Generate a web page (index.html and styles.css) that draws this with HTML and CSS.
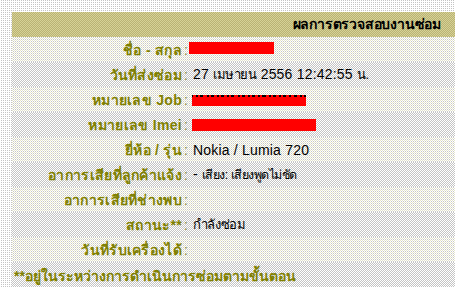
FILE: index.html
```html
<!DOCTYPE html>
<html lang="th">
<head>
<meta charset="utf-8">
<link rel="stylesheet" href="styles.css">
</head>
<body>
<div class="panel">
  <div class="head">ผลการตรวจสอบงานซ่อม</div>
  <div class="row light">
    <div class="lbl">ชื่อ - สกุล</div>
    <div class="val"><span class="colon">:</span><span class="redact r1"></span></div>
  </div>
  <div class="row dark">
    <div class="lbl">วันที่ส่งซ่อม</div>
    <div class="val"><span class="colon">:</span><span class="txt">27 <span class="th">เมษายน</span> 2556 12:42:55 <span class="th">น.</span></span></div>
  </div>
  <div class="row light">
    <div class="lbl">หมายเลข Job</div>
    <div class="val"><span class="colon">:</span><span class="redact r3"></span></div>
  </div>
  <div class="row dark">
    <div class="lbl">หมายเลข Imei</div>
    <div class="val"><span class="colon">:</span><span class="redact r4"></span></div>
  </div>
  <div class="row light">
    <div class="lbl">ยี่ห้อ / รุ่น</div>
    <div class="val"><span class="colon">:</span><span class="txt">Nokia / Lumia 720</span></div>
  </div>
  <div class="row dark">
    <div class="lbl">อาการเสียที่ลูกค้าแจ้ง</div>
    <div class="val"><span class="colon">:</span><span class="txt">- <span class="th narrow">เสียง: เสียงพูดไม่ชัด</span></span></div>
  </div>
  <div class="row light">
    <div class="lbl">อาการเสียที่ช่างพบ</div>
    <div class="val"><span class="colon">:</span></div>
  </div>
  <div class="row dark">
    <div class="lbl">สถานะ**</div>
    <div class="val"><span class="colon">:</span><span class="txt th">กำลังซ่อม</span></div>
  </div>
  <div class="row light">
    <div class="lbl">วันที่รับเครื่องได้</div>
    <div class="val"><span class="colon">:</span></div>
  </div>
  <div class="row dark foot">
    <div class="note">**อยู่ในระหว่างการดำเนินการซ่อมตามขั้นตอน</div>
  </div>
</div>
</body>
</html>
```
FILE: styles.css
```css
html, body {
  margin: 0;
  padding: 0;
}
body {
  width: 455px;
  height: 287px;
  overflow: hidden;
  background: conic-gradient(#c4c4c4 0 25%, #ffffff 0) 0 0 / 2px 2px;
  font-family: "Liberation Sans", "DejaVu Sans", sans-serif;
  font-size: 14px;
  color: #000;
}
.panel {
  margin: 12px 0 0 12px;
  display: flex;
  flex-direction: column;
}
.head {
  height: 25px;
  line-height: 25px;
  text-align: right;
  padding-right: 14px;
  font-weight: bold;
  font-size: 14px;
  letter-spacing: -0.2px;
  background: repeating-conic-gradient(#bab274 0 25%, #d6d296 0 50%) 0 0 / 2px 2px;
}
.row {
  height: 25px;
  display: grid;
  grid-template-columns: 170px 1fr;
  align-items: center;
}
.light {
  background:
    conic-gradient(#c8c8c8 0 25%, transparent 0) 0 0 / 2px 2px,
    conic-gradient(from 180deg, #e6e6cc 0 25%, #ffffff 0) 0 0 / 2px 2px;
}
.dark {
  background: repeating-conic-gradient(#c4c4c4 0 25%, #ffffff 0 50%) 0 0 / 2px 2px;
}
.lbl {
  text-align: right;
  color: #808000;
  font-weight: bold;
  font-size: 14px;
  letter-spacing: 0.3px;
}
.val {
  display: flex;
  align-items: center;
  white-space: nowrap;
}
.colon {
  color: #8c8c40;
  padding: 0 5px 0 2px;
}
.txt {
  letter-spacing: 0.2px;
}
.th {
  font-size: 13px;
  letter-spacing: -0.4px;
}
.th.narrow {
  font-size: 12.5px;
  letter-spacing: -0.5px;
}
.redact {
  display: inline-block;
  background: #ff0000;
}
.r1 { width: 85px; height: 12px; margin-left: -4px; margin-top: -3px; }
.r3 {
  width: 114px;
  height: 9px;
  margin-left: -1px;
  margin-top: 2px;
  border-top: 2px solid transparent;
  border-image: repeating-linear-gradient(90deg, #000 0 3px, #ff0000 3px 6px, #000 6px 8px, #ff0000 8px 10px) 2;
}
.r4 { width: 124px; height: 12px; margin-left: -1px; margin-top: 1px; }
.foot {
  height: 27px;
  display: flex;
}
.note {
  padding-left: 2px;
  color: #808000;
  font-weight: bold;
  font-size: 14px;
}
```
